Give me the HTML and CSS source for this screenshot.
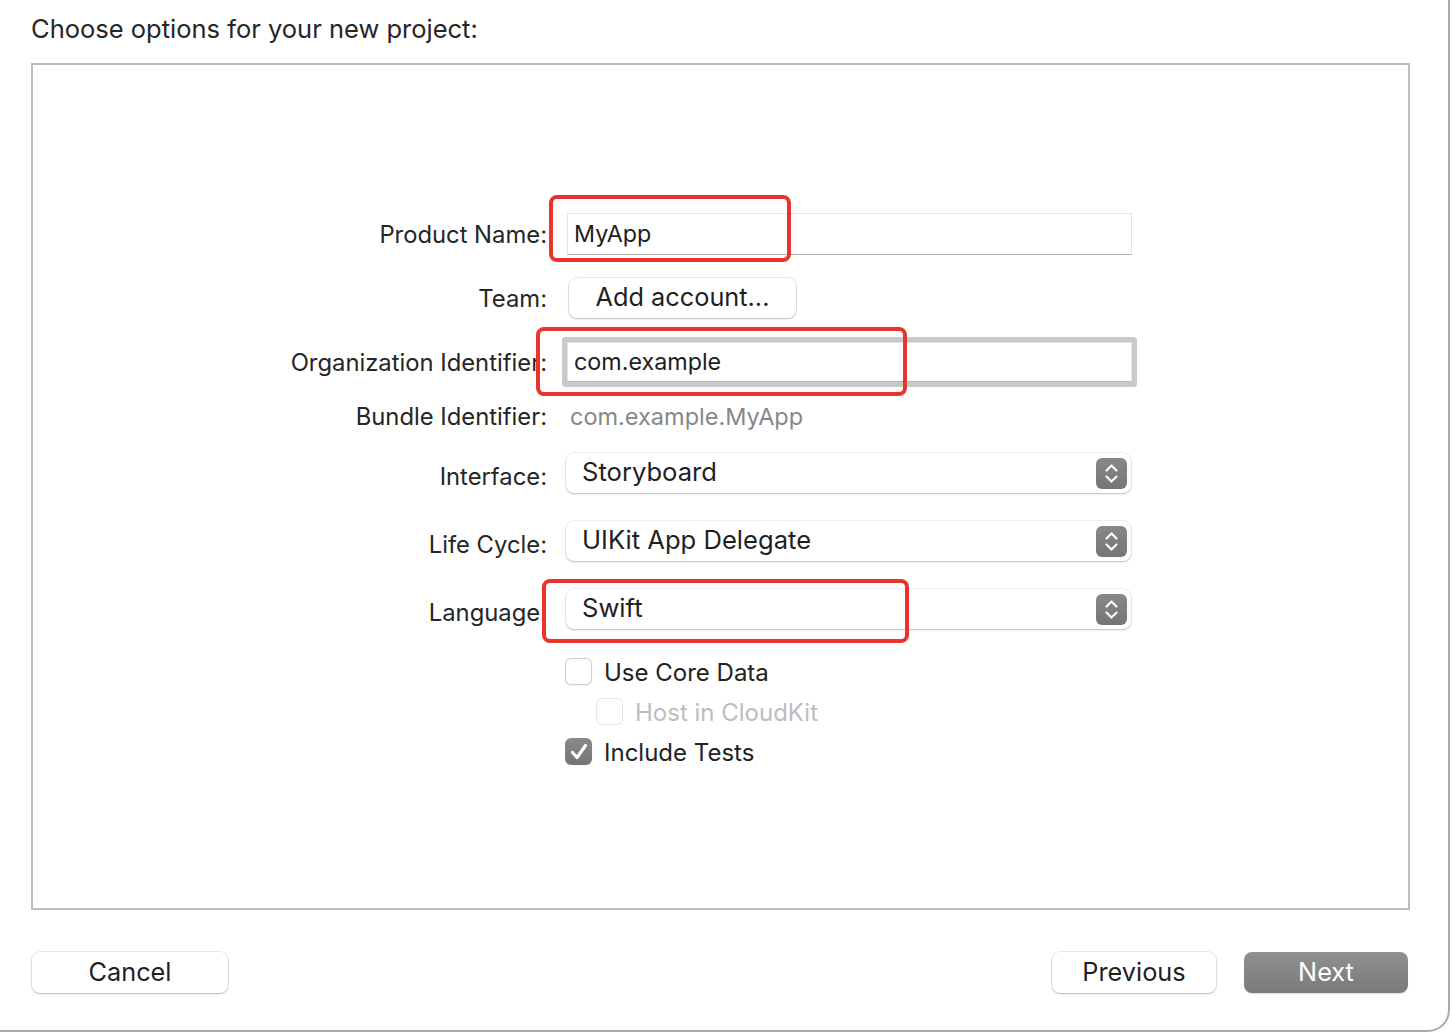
FILE: index.html
```html
<!DOCTYPE html>
<html>
<head>
<meta charset="utf-8">
<link rel="stylesheet" href="styles.css">
</head>
<body>
<div class="window">
  <h1 class="title">Choose options for your new project:</h1>
  <div class="panel">
    <div class="form">
      <div class="row r1">
        <div class="label">Product Name:</div>
        <div class="field"><div class="textfield">MyApp</div></div>
      </div>
      <div class="row r2">
        <div class="label">Team:</div>
        <div class="field"><div class="button add">Add account...</div></div>
      </div>
      <div class="row r3">
        <div class="label">Organization Identifier:</div>
        <div class="field"><div class="textfield focused">com.example</div></div>
      </div>
      <div class="row r4">
        <div class="label">Bundle Identifier:</div>
        <div class="field"><div class="static">com.example.MyApp</div></div>
      </div>
      <div class="row r5">
        <div class="label">Interface:</div>
        <div class="field"><div class="popup"><span>Storyboard</span><span class="stepper"><svg width="31" height="31" viewBox="0 0 31 31"><path d="M10.5 12.5 L15.5 7.5 L20.5 12.5" /><path d="M10.5 18.5 L15.5 23.5 L20.5 18.5" /></svg></span></div></div>
      </div>
      <div class="row r6">
        <div class="label">Life Cycle:</div>
        <div class="field"><div class="popup"><span>UIKit App Delegate</span><span class="stepper"><svg width="31" height="31" viewBox="0 0 31 31"><path d="M10.5 12.5 L15.5 7.5 L20.5 12.5" /><path d="M10.5 18.5 L15.5 23.5 L20.5 18.5" /></svg></span></div></div>
      </div>
      <div class="row r7">
        <div class="label">Language:</div>
        <div class="field"><div class="popup"><span>Swift</span><span class="stepper"><svg width="31" height="31" viewBox="0 0 31 31"><path d="M10.5 12.5 L15.5 7.5 L20.5 12.5" /><path d="M10.5 18.5 L15.5 23.5 L20.5 18.5" /></svg></span></div></div>
      </div>
      <div class="row check c1">
        <div class="label"></div>
        <div class="field"><span class="box"></span><span class="ctext">Use Core Data</span></div>
      </div>
      <div class="row check c2">
        <div class="label"></div>
        <div class="field indent"><span class="box disabled"></span><span class="ctext dim">Host in CloudKit</span></div>
      </div>
      <div class="row check c3">
        <div class="label"></div>
        <div class="field"><span class="box checked"><svg width="28" height="28" viewBox="0 0 28 28"><path d="M7.5 14.5 L12 19.5 L20.5 7.5" /></svg></span><span class="ctext">Include Tests</span></div>
      </div>
    </div>
  </div>
  <div class="footer">
    <div class="button fbtn cancel">Cancel</div>
    <div class="spacer"></div>
    <div class="button fbtn prev">Previous</div>
    <div class="button fbtn next">Next</div>
  </div>

  <div class="mark m1"></div>
  <div class="mark m2"></div>
  <div class="mark m3"></div>
</div>
</body>
</html>
```
FILE: styles.css
```css
* { box-sizing: border-box; }
html, body { margin: 0; padding: 0; background: #ffffff; }
body {
  font-family: Inter, "Noto Sans", "Liberation Sans", sans-serif;
  color: #222;
  width: 1452px;
  height: 1034px;
  overflow: hidden;
}
.window {
  position: relative;
  width: 1450px;
  height: 1032px;
  background: #fff;
  border-right: 2px solid #a9a9a9;
  border-bottom: 2px solid #a9a9a9;
  border-bottom-right-radius: 22px;
  padding: 0 0 0 31px;
}
.title {
  margin: 0;
  padding-top: 14px;
  height: 63px;
  font-size: 25.5px;
  font-weight: 400;
  color: #262626;
  line-height: 30px;
}
.panel {
  width: 1379px;
  height: 847px;
  border: 2px solid #bcbcbc;
  padding-top: 148px;
}
.form { display: flex; flex-direction: column; }
.row {
  display: grid;
  grid-template-columns: 514px 565px;
  column-gap: 20px;
  align-items: center;
}
.label {
  text-align: right;
  font-size: 23.8px;
  color: #262626;
  white-space: nowrap;
}
.field { display: flex; align-items: center; }
.r1 { height: 42px; }
.r2 { height: 40px; margin-top: 23px; }
.r3 { height: 40px; margin-top: 24px; }
.r4 { height: 30px; margin-top: 19px; }
.r5 { height: 40px; margin-top: 22px; }
.r6 { height: 40px; margin-top: 28px; }
.r7 { height: 40px; margin-top: 28px; }
.check { height: 40px; }
.c1 { margin-top: 22px; }
.r5 .label, .r6 .label, .r7 .label { padding-top: 6px; }

.textfield {
  width: 565px;
  height: 42px;
  border: 1px solid #e4e4e4;
  border-bottom: 1px solid #b4b4b4;
  background: #fff;
  font-size: 23.3px;
  line-height: 40px;
  padding-left: 6px;
  color: #1e1e1e;
}
.textfield.focused {
  height: 40px;
  line-height: 38px;
  box-shadow: 0 0 0 5px #c9c9c9;
  border-radius: 1px;
}
.button {
  background: #fff;
  border-radius: 8px;
  box-shadow: 0 0 0 1px rgba(0,0,0,0.08), 0 1px 2px rgba(0,0,0,0.22);
  text-align: center;
  font-size: 25.3px;
  color: #1f1f1f;
}
.add {
  margin-left: 2px;
  width: 227px;
  height: 40px;
  line-height: 38px;
}
.static { font-size: 23.5px; color: #878787; padding-left: 3px; }
.popup {
  width: 565px;
  height: 40px;
  background: #fff;
  border-radius: 8px;
  box-shadow: 0 0 0 1px rgba(0,0,0,0.06), 0 1px 2px rgba(0,0,0,0.22);
  display: flex;
  align-items: center;
  justify-content: space-between;
  padding: 0 4px 0 16px;
  font-size: 25.6px;
  color: #1f1f1f;
  margin-left: -1px;
}
.popup > span:first-child { margin-top: -3px; }
.stepper {
  width: 31px;
  height: 31px;
  border-radius: 6px;
  background: linear-gradient(#888, #757575);
  display: block;
}
.stepper svg { display: block; }
.stepper path { fill: none; stroke: #fff; stroke-width: 2.2; stroke-linecap: round; stroke-linejoin: round; }

.box {
  width: 27px;
  height: 27px;
  border-radius: 6px;
  background: #fff;
  box-shadow: inset 0 0 0 1px #cfcfcf, 0 1px 1px rgba(0,0,0,0.06);
  display: block;
  flex: none;
}
.box.disabled { box-shadow: inset 0 0 0 1px #e6e6e6; }
.box.checked {
  background: linear-gradient(#8a8a8a, #747474);
  box-shadow: none;
}
.box svg { display: block; }
.box path { fill: none; stroke: #fff; stroke-width: 3.2; stroke-linecap: round; stroke-linejoin: round; }
.ctext { margin-left: 12px; font-size: 24px; color: #222; margin-top: 2px; }
.ctext.dim { color: #bdbdbd; }
.indent { padding-left: 31px; }
.field .box { margin-left: -2px; }

.footer {
  display: flex;
  align-items: center;
  margin-top: 42px;
  width: 1377px;
  padding-left: 1px;
}
.spacer { flex: 1; }
.fbtn { height: 41px; line-height: 39px; font-size: 25.3px; }
.cancel { width: 196px; }
.prev { width: 164px; }
.next {
  width: 164px;
  margin-left: 28px;
  background: linear-gradient(#909090, #7a7a7a);
  color: #fff;
  box-shadow: 0 1px 1px rgba(0,0,0,0.15);
}

.mark {
  position: absolute;
  border: 4px solid #e8342a;
  border-radius: 8px;
}
.m1 { left: 549px; top: 195px; width: 242px; height: 67px; }
.m2 { left: 536px; top: 327px; width: 371px; height: 69px; }
.m3 { left: 542px; top: 579px; width: 367px; height: 64px; }
```
